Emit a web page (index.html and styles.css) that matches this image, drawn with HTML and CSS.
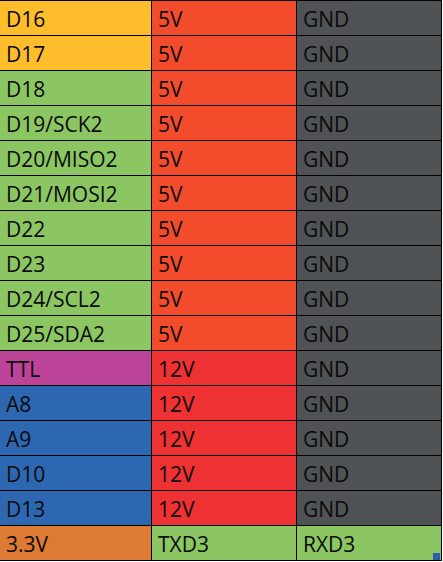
FILE: index.html
```html
<!DOCTYPE html>
<html>
<head>
<meta charset="utf-8">
<link rel="stylesheet" href="styles.css">
</head>
<body>
<div class="sheet">
  <div class="c y">D16</div><div class="c o">5V</div><div class="c g">GND</div>
  <div class="c y">D17</div><div class="c o">5V</div><div class="c g">GND</div>
  <div class="c gr">D18</div><div class="c o">5V</div><div class="c g">GND</div>
  <div class="c gr">D19/SCK2</div><div class="c o">5V</div><div class="c g">GND</div>
  <div class="c gr">D20/MISO2</div><div class="c o">5V</div><div class="c g">GND</div>
  <div class="c gr">D21/MOSI2</div><div class="c o">5V</div><div class="c g">GND</div>
  <div class="c gr">D22</div><div class="c o">5V</div><div class="c g">GND</div>
  <div class="c gr">D23</div><div class="c o">5V</div><div class="c g">GND</div>
  <div class="c gr">D24/SCL2</div><div class="c o">5V</div><div class="c g">GND</div>
  <div class="c gr">D25/SDA2</div><div class="c o">5V</div><div class="c g">GND</div>
  <div class="c m">TTL</div><div class="c r">12V</div><div class="c g">GND</div>
  <div class="c b">A8</div><div class="c r">12V</div><div class="c g">GND</div>
  <div class="c b">A9</div><div class="c r">12V</div><div class="c g">GND</div>
  <div class="c b">D10</div><div class="c r">12V</div><div class="c g">GND</div>
  <div class="c b">D13</div><div class="c r">12V</div><div class="c g">GND</div>
  <div class="c or">3.3V</div><div class="c gr">TXD3</div><div class="c gr last">RXD3<span class="handle"></span></div>
</div>
</body>
</html>
```
FILE: styles.css
```css
html, body {
  margin: 0;
  padding: 0;
  background: #ffffff;
}
.sheet {
  width: 441px;
  display: grid;
  grid-template-columns: 151px 144px 144px;
  grid-auto-rows: 34px;
  gap: 1px;
  background: #000000;
  padding: 1px 1px 1px 0;
  font-family: "Open Sans", "Noto Sans", sans-serif;
  font-size: 21px;
  color: #0a0a0a;
}
.c {
  position: relative;
  padding: 3px 0 0 6px;
  line-height: 31px;
  white-space: nowrap;
  overflow: hidden;
}
.y { background: #febd2b; }
.o { background: #f34c2d; }
.g { background: #4f5355; }
.gr { background: #8cc663; }
.m { background: #bc4498; }
.b { background: #2e67b1; }
.r { background: #ee3132; }
.or { background: #dd7a33; }
.handle {
  position: absolute;
  right: 1px;
  bottom: 0;
  width: 7px;
  height: 7px;
  background: #2e5ea8;
}
```
